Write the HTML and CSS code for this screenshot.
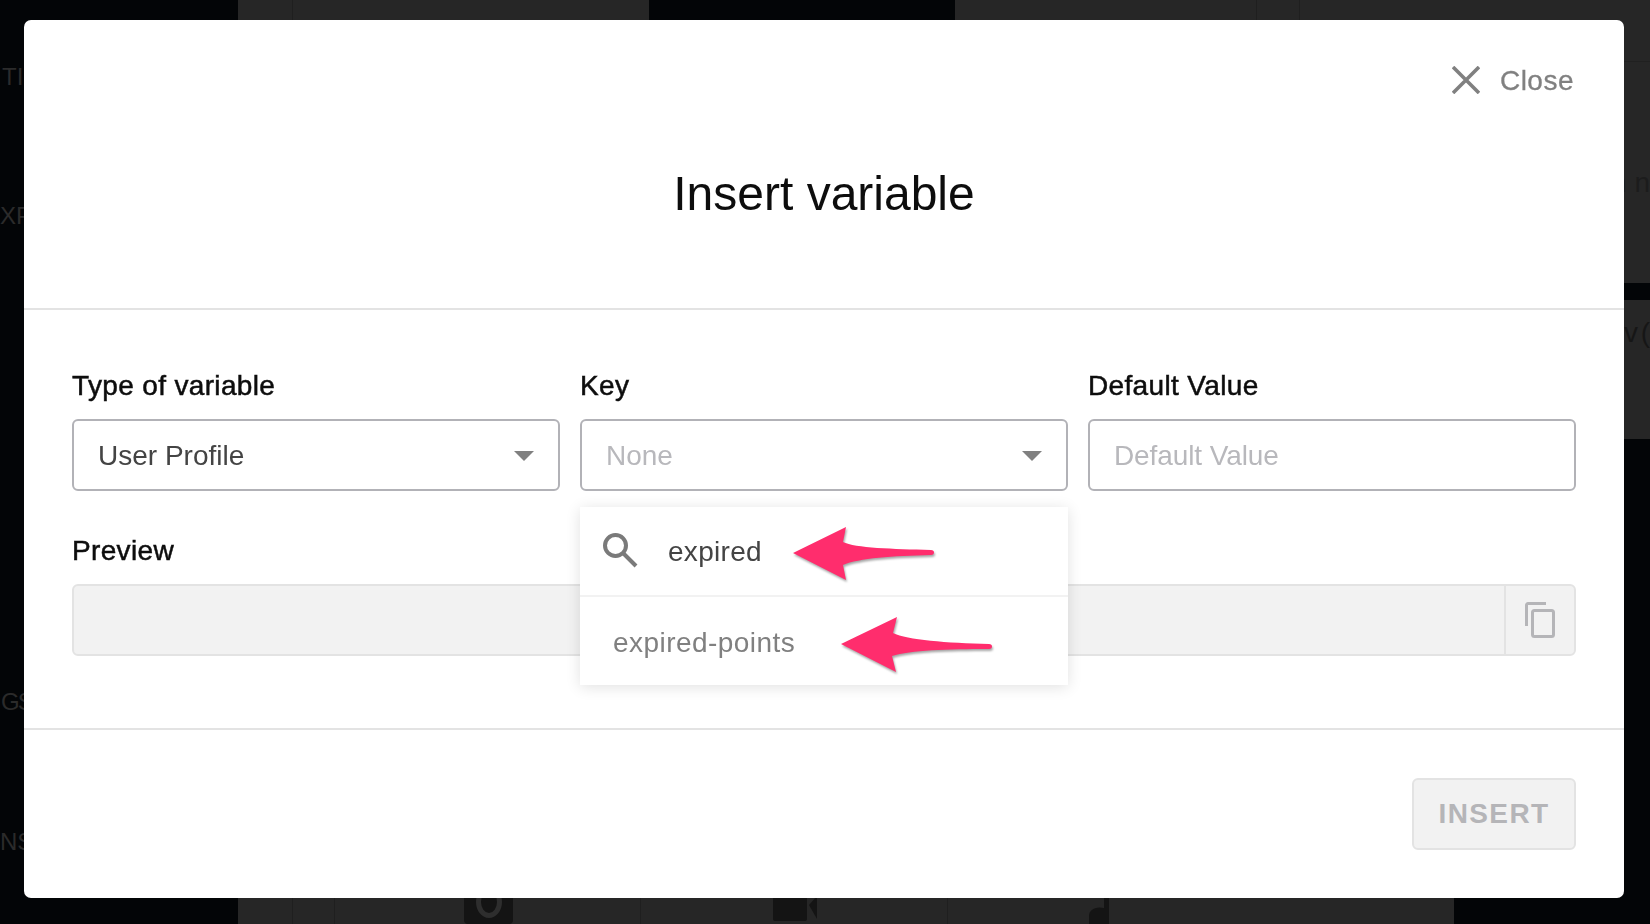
FILE: index.html
```html
<!DOCTYPE html>
<html lang="en">
<head>
    <meta charset="UTF-8">
    <title>Insert variable</title>
    <link rel="stylesheet" href="styles.css">
</head>
<body>

    <!-- page behind the dialog, mostly hidden -->
    <div class="page">
        <aside class="side">
            <span class="side-item side-ti">TI</span>
            <span class="side-item side-xp">XP</span>
            <span class="side-item side-gs">GS</span>
            <span class="side-item side-ns">NS</span>
        </aside>
        <main class="main">
            <div class="top-row">
                <div class="panel panel-left">
                    <div class="top-cells">
                        <div class="top-cell cell-first"></div>
                    </div>
                </div>
                <div class="panel panel-right">
                    <div class="top-cells has-line">
                        <div class="top-cell cell-wide"></div>
                        <div class="top-cell cell-narrow"></div>
                    </div>
                    <span class="peek peek-top">n n</span>
                </div>
            </div>
            <div class="panel middle-panel">
                <span class="peek peek-middle">ev (</span>
            </div>
            <div class="panel bottom-panel">
                <div class="bottom-cell cell-a"></div>
                <div class="bottom-cell cell-b"></div>
                <div class="bottom-cell cell-c">
                    <span class="thumb"><span class="ring"></span></span>
                </div>
                <div class="bottom-cell cell-d">
                    <svg class="video-icon" width="46" height="44" viewBox="0 0 46 44">
                        <path d="M1 0 H35 V39 A2 2 0 0 1 33 41 H3 A2 2 0 0 1 1 39 Z" />
                        <path d="M37 25 L45 16 V39 Z" />
                    </svg>
                </div>
                <div class="bottom-cell cell-e">
                    <svg class="note-icon" width="20" height="44" viewBox="0 0 20 44">
                        <path d="M15 0 H20 V44 H0 V36 C0 30 6 26 15 28 Z" />
                    </svg>
                </div>
            </div>
        </main>
    </div>

    <div class="overlay">
        <div class="modal">
            <header class="modal-header">
                <div class="close-row">
                    <svg class="close-icon" width="28" height="28" viewBox="0 0 28 28">
                        <path d="M1 1 L27 27 M27 1 L1 27" />
                    </svg>
                    <span class="close-text">Close</span>
                </div>
                <h1 class="modal-title">Insert variable</h1>
            </header>

            <section class="modal-body">
                <div class="fields">
                    <div class="field">
                        <label class="field-label">Type of variable</label>
                        <div class="control">
                            <span class="control-text">User Profile</span>
                            <span class="caret"></span>
                        </div>
                    </div>
                    <div class="field key-field">
                        <label class="field-label">Key</label>
                        <div class="control">
                            <span class="control-text is-empty">None</span>
                            <span class="caret"></span>
                        </div>
                        <div class="dropdown">
                            <div class="dropdown-search">
                                <svg class="search-icon" width="36" height="36" viewBox="0 0 36 36">
                                    <circle cx="13.5" cy="13.5" r="10.5" />
                                    <path d="M21 21 L34 34" />
                                </svg>
                                <span class="search-text">expired</span>
                            </div>
                            <div class="dropdown-item">expired-points</div>
                            <svg class="arrow arrow-one" width="142" height="54" viewBox="0 0 142 54">
                                <path d="M0 26 L53 0 L50 15 C62 21 100 22 138 23 C142 23 142 28 138 28 C100 29 66 31 50 38 L53 53 Z" />
                            </svg>
                            <svg class="arrow arrow-two" width="152" height="56" viewBox="0 0 152 56">
                                <path d="M0 27 L56 0 L52 16 C66 23 106 26 148 27 C152 27 152 32 148 32 C106 32 70 33 51 39 L55 55 Z" />
                            </svg>
                        </div>
                    </div>
                    <div class="field">
                        <label class="field-label">Default Value</label>
                        <div class="control">
                            <span class="control-text is-empty placeholder-value">Default Value</span>
                        </div>
                    </div>
                </div>

                <div class="preview">
                    <label class="field-label">Preview</label>
                    <div class="preview-box">
                        <div class="preview-value"></div>
                        <div class="preview-copy">
                            <svg class="copy-icon" width="30" height="36" viewBox="0 0 30 36">
                                <path d="M1.5 24 V3 A1.5 1.5 0 0 1 3 1.5 H21" />
                                <rect x="7.5" y="8.5" width="21" height="26" rx="2" />
                            </svg>
                        </div>
                    </div>
                </div>
            </section>

            <footer class="modal-footer">
                <button class="insert-btn">INSERT</button>
            </footer>
        </div>
    </div>

</body>
</html>
```

FILE: styles.css
```css
* {
    box-sizing: border-box;
}
html, body {
    height: 100%;
}
body {
    margin: 0;
    overflow: hidden;
    background-color: #030507;
    font-family: 'Liberation Sans', Arial, sans-serif;
    color: #444;
}

/* background page */
.page {
    display: flex;
    height: 924px;
}
.side {
    width: 238px;
    flex-shrink: 0;
    display: flex;
    flex-direction: column;
    overflow: hidden;
}
.side-item {
    font-size: 24px;
    line-height: 28px;
    color: #2b2b2b;
}
.side-ti {
    margin: 63px 0 0 2px;
}
.side-xp {
    margin: 111px 0 0 0;
}
.side-gs {
    margin: 458px 0 0 1px;
    letter-spacing: -2px;
}
.side-ns {
    margin: 112px 0 0 0;
}
.main {
    flex: 1;
    display: flex;
    flex-direction: column;
}
.top-row {
    display: flex;
    justify-content: space-between;
    height: 283px;
}
.panel {
    background-color: #262626;
}
.panel-left {
    width: 411px;
    border-radius: 0 0 6px 0;
}
.panel-right {
    width: 695px;
    display: flex;
    flex-direction: column;
}
.top-cells {
    display: flex;
    height: 62px;
}
.top-cells.has-line {
    border-bottom: 1px solid #202020;
}
.top-cell {
    height: 100%;
    border-right: 1px solid #1f1f1f;
}
.cell-first {
    width: 55px;
}
.cell-wide {
    width: 302px;
}
.cell-narrow {
    width: 43px;
}
.peek {
    font-size: 28px;
    line-height: 34px;
    white-space: nowrap;
}
.peek-top {
    margin-top: 104px;
    align-self: flex-end;
    color: #1c1c1c;
}
.middle-panel {
    margin-top: 17px;
    height: 139px;
    width: 100px;
    align-self: flex-end;
    display: flex;
    justify-content: flex-end;
    padding-top: 16px;
}
.peek-middle {
    word-spacing: -5px;
    color: #161616;
}
.bottom-panel {
    margin-top: auto;
    height: 44px;
    width: 1216px;
    display: flex;
}
.bottom-cell {
    border-right: 1px solid #1f1f1f;
}
.cell-a {
    width: 55px;
}
.cell-b {
    width: 42px;
}
.cell-c {
    width: 306px;
    padding-left: 129px;
}
.cell-d {
    width: 307px;
    padding-left: 131px;
}
.cell-e {
    flex: 1;
    padding-left: 141px;
    border-right: none;
}
.thumb {
    display: flex;
    justify-content: center;
    align-items: flex-end;
    width: 49px;
    height: 44px;
    padding-bottom: 6px;
    border-radius: 0 0 4px 4px;
    background-color: #141414;
}
.ring {
    width: 26px;
    height: 32px;
    border: 5px solid #2e2e2e;
    border-radius: 50%;
}
.video-icon, .note-icon {
    display: block;
    fill: #141414;
}

/* dialog */
.overlay {
    position: fixed;
    top: 0;
    left: 0;
    width: 100%;
    height: 100%;
    padding: 20px 26px 26px 24px;
}
.modal {
    height: 878px;
    background-color: #fff;
    border-radius: 7px;
    display: flex;
    flex-direction: column;
}
.modal-header {
    height: 290px;
    flex-shrink: 0;
    border-bottom: 2px solid #e3e3e3;
    padding: 46px 50px 0 0;
}
.close-row {
    display: flex;
    justify-content: flex-end;
    align-items: center;
    gap: 20px;
    height: 28px;
}
.close-icon path {
    fill: none;
    stroke: #808080;
    stroke-width: 3.6;
}
.close-text {
    padding-top: 2px;
    font-size: 28px;
    letter-spacing: 0.5px;
    color: #808080;
    -webkit-text-stroke: 0.3px #808080;
}
.modal-title {
    margin: 72px 0 0 50px;
    font-size: 48px;
    line-height: 56px;
    font-weight: normal;
    text-align: center;
    color: #0d0d0d;
}
.modal-body {
    height: 420px;
    flex-shrink: 0;
    padding: 59px 48px 0;
    border-bottom: 2px solid #e3e3e3;
}
.fields {
    display: grid;
    grid-template-columns: repeat(3, 1fr);
    gap: 20px;
}
.field {
    min-width: 0;
}
.key-field {
    position: relative;
}
.field-label {
    display: block;
    height: 34px;
    margin-bottom: 16px;
    font-size: 28px;
    line-height: 34px;
    letter-spacing: 0.35px;
    color: #0d0d0d;
    -webkit-text-stroke: 0.5px #0d0d0d;
}
.control {
    height: 72px;
    padding: 2px 24px 0 24px;
    border: 2px solid #b2b2b7;
    border-radius: 6px;
    background-color: #fff;
    display: flex;
    align-items: center;
    justify-content: space-between;
}
.control-text {
    font-size: 28px;
    color: #444;
}
.control-text.is-empty {
    color: #b8b8bc;
}
.placeholder-value {
    letter-spacing: -0.1px;
}
.caret {
    width: 0;
    height: 0;
    border-left: 10px solid transparent;
    border-right: 10px solid transparent;
    border-top: 10px solid #808080;
}

/* key search dropdown */
.dropdown {
    position: absolute;
    top: 138px;
    left: 0;
    width: 100%;
    height: 178px;
    background-color: #fff;
    box-shadow: 0 2px 14px rgba(0, 0, 0, 0.12);
    z-index: 2;
}
.dropdown-search {
    height: 90px;
    padding: 0 0 2px 22px;
    border-bottom: 2px solid #f2f2f2;
    display: flex;
    align-items: center;
}
.search-icon {
    flex-shrink: 0;
    fill: none;
    stroke: #7a7a7a;
    stroke-width: 4;
}
.search-text {
    margin-left: 30px;
    padding-top: 4px;
    font-size: 28px;
    letter-spacing: 0.3px;
    color: #444;
}
.dropdown-item {
    height: 88px;
    padding: 3px 0 0 33px;
    display: flex;
    align-items: center;
    font-size: 28px;
    letter-spacing: 0.45px;
    color: #808080;
}
.arrow {
    position: absolute;
    fill: #ff2d6d;
    filter: drop-shadow(1px 2px 1px rgba(0, 0, 0, 0.35));
}
.arrow-one {
    top: 20px;
    left: 213px;
}
.arrow-two {
    top: 110px;
    left: 261px;
}

/* preview */
.preview {
    margin-top: 43px;
}
.preview-box {
    height: 72px;
    border: 2px solid #e3e3e3;
    border-radius: 6px;
    background-color: #f2f2f2;
    display: flex;
}
.preview-value {
    flex: 1;
}
.preview-copy {
    width: 70px;
    border-left: 2px solid #e3e3e3;
    display: flex;
    justify-content: center;
    align-items: center;
}
.copy-icon {
    fill: none;
    stroke: #b5b5b8;
    stroke-width: 3;
}

.modal-footer {
    flex: 1;
    padding: 48px 48px 0;
    display: flex;
    justify-content: flex-end;
    align-items: flex-start;
}
.insert-btn {
    width: 164px;
    height: 72px;
    border: 2px solid #e3e3e3;
    border-radius: 6px;
    background-color: #f2f2f2;
    font-family: inherit;
    font-size: 28px;
    font-weight: bold;
    letter-spacing: 1.4px;
    color: #b5b5b8;
}
```
